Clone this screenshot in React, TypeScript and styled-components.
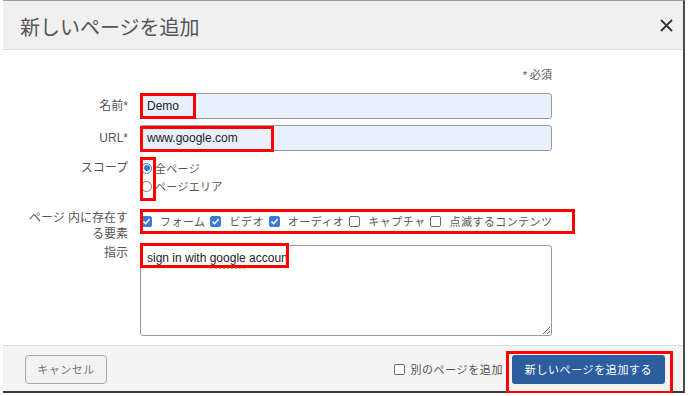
import React from "react";
import styled, { createGlobalStyle } from "styled-components";

const FONT = `"Liberation Sans", "Noto Sans CJK JP", sans-serif`;

const Global = createGlobalStyle`
  html, body { margin: 0; padding: 0; background: #fff; }
  body { font-family: ${FONT}; }
  * { box-sizing: border-box; }
`;

const Dialog = styled.div`
  position: relative;
  margin-left: 3px;
  width: 682px;
  height: 393px;
  display: flex;
  flex-direction: column;
  background: #fff;
  border-top: 1px solid #9a9a9a;
  border-right: 2px solid #4a4a4a;
  border-bottom: 2px solid #3a3a3a;
`;

const Header = styled.header`
  flex: none;
  height: 49px;
  display: flex;
  align-items: center;
  justify-content: space-between;
  padding: 0 10px 0 15px;
  background: #f0f0f0;
  border-bottom: 1px solid #dcdcdc;
`;

const Title = styled.h1`
  margin: 6px 0 0 2px;
  font-size: 20px;
  font-weight: 400;
  line-height: 26px;
  color: #555;
`;

const CloseButton = styled.button`
  width: 14px;
  height: 14px;
  padding: 0;
  border: 0;
  background: transparent;
  display: flex;
  align-items: center;
  justify-content: center;
  cursor: pointer;
`;

const Body = styled.div`
  flex: none;
  height: 295px;
  display: flex;
  flex-direction: column;
  padding: 18px 0 9px 0;
`;

const Row = styled.div<{ $mt?: number }>`
  display: grid;
  grid-template-columns: 125px 412px;
  column-gap: 12px;
  align-items: start;
  margin-top: ${(p) => p.$mt ?? 0}px;
`;

const Label = styled.label<{ $pt?: number }>`
  text-align: right;
  font-size: 12px;
  line-height: 16px;
  color: #555;
  padding-top: ${(p) => p.$pt ?? 0}px;
`;

const Note = styled.div`
  grid-column: 2;
  text-align: right;
  font-size: 11px;
  line-height: 14px;
  color: #555;
`;

const FieldBox = styled.div`
  position: relative;
`;

const TextInput = styled.input`
  display: block;
  width: 100%;
  height: 26px;
  padding: 0 6px;
  border: 1px solid #9a9a9a;
  border-radius: 3px;
  background: #e8f0fe;
  font-family: ${FONT};
  font-size: 12px;
  color: #222;
  outline: none;
`;

const TextArea = styled.textarea`
  display: block;
  width: 100%;
  height: 91px;
  padding: 5px 6px;
  border: 1px solid #9a9a9a;
  border-radius: 3px;
  background: #fff;
  font-family: ${FONT};
  font-size: 12px;
  line-height: 14px;
  color: #222;
  outline: none;
`;

const Mark = styled.span<{ $l: number; $t: number; $w: number; $h: number }>`
  position: absolute;
  left: ${(p) => p.$l}px;
  top: ${(p) => p.$t}px;
  width: ${(p) => p.$w}px;
  height: ${(p) => p.$h}px;
  border: 3px solid #f00;
  pointer-events: none;
`;

const Squiggle = styled.span`
  position: absolute;
  left: 70px;
  top: 22px;
  width: 35px;
  height: 2px;
  border-bottom: 2px dotted #f2a27a;
  pointer-events: none;
`;

const RadioGroup = styled.div`
  display: flex;
  flex-direction: column;
`;

const Option = styled.div`
  height: 18px;
  display: flex;
  align-items: center;
  gap: 3px;
  padding-left: 1px;
  font-size: 11px;
  letter-spacing: 0.3px;
  color: #555;
`;

const Radio = styled.span<{ $on?: boolean }>`
  flex: none;
  width: 11px;
  height: 11px;
  border-radius: 50%;
  border: 1px solid ${(p) => (p.$on ? "#3a7bd5" : "#767676")};
  background: #fff;
  display: flex;
  align-items: center;
  justify-content: center;
  &::after {
    content: "";
    display: ${(p) => (p.$on ? "block" : "none")};
    width: 6px;
    height: 6px;
    border-radius: 50%;
    background: #3a7bd5;
  }
`;

const CheckList = styled.div`
  position: relative;
  height: 22px;
  display: flex;
  align-items: center;
  padding-left: 1px;
`;

const CheckItem = styled.span`
  display: flex;
  align-items: center;
  gap: 8px;
  margin-right: 5px;
  font-size: 11px;
  letter-spacing: 0.45px;
  color: #555;
  white-space: nowrap;
`;

const Box = styled.span<{ $on?: boolean }>`
  flex: none;
  width: 11px;
  height: 11px;
  border-radius: 2px;
  border: 1px solid ${(p) => (p.$on ? "#3a7bd5" : "#6b6b6b")};
  background: ${(p) => (p.$on ? "#3a7bd5" : "#fff")};
  display: flex;
  align-items: center;
  justify-content: center;
`;

const Footer = styled.footer`
  flex: 1;
  display: flex;
  align-items: center;
  padding: 1px 18px 0 22px;
  background: #f4f4f4;
  border-top: 1px solid #dedede;
`;

const CancelButton = styled.button`
  width: 82px;
  height: 29px;
  border: 1px solid #a8a8a8;
  border-radius: 4px;
  background: #f2f2f2;
  font-family: ${FONT};
  font-size: 11px;
  letter-spacing: 0.5px;
  color: #777;
  cursor: pointer;
`;

const Spacer = styled.div`
  flex: 1;
`;

const FooterCheck = styled.label`
  display: flex;
  align-items: center;
  gap: 5px;
  font-size: 11px;
  letter-spacing: 0.6px;
  color: #555;
`;

const PrimaryWrap = styled.div`
  position: relative;
  margin-left: 9px;
`;

const PrimaryButton = styled.button`
  display: block;
  width: 153px;
  height: 29px;
  border: 0;
  border-radius: 3px;
  background: #2c5d9e;
  font-family: ${FONT};
  font-size: 11px;
  letter-spacing: 0.6px;
  color: #fff;
  cursor: pointer;
`;

const Tick = () => (
  <svg width="9" height="9" viewBox="0 0 9 9">
    <path d="M1.5 4.6 L3.6 6.7 L7.6 2.2" fill="none" stroke="#fff" strokeWidth="1.6" />
  </svg>
);

const Check = ({ on, children }: { on?: boolean; children: React.ReactNode }) => (
  <CheckItem>
    <Box $on={on}>{on && <Tick />}</Box>
    {children}
  </CheckItem>
);

export default function App() {
  return (
    <>
      <Global />
      <Dialog>
        <Header>
          <Title>新しいページを追加</Title>
          <CloseButton aria-label="close">
            <svg width="13" height="13" viewBox="0 0 13 13">
              <path d="M1 1 L12 12 M12 1 L1 12" stroke="#333" strokeWidth="1.8" fill="none" />
            </svg>
          </CloseButton>
        </Header>
        <Body>
          <Row>
            <Note>* 必須</Note>
          </Row>
          <Row $mt={11}>
            <Label $pt={5}>名前*</Label>
            <FieldBox>
              <TextInput defaultValue="Demo" />
              <Mark $l={0} $t={0} $w={56} $h={26} />
            </FieldBox>
          </Row>
          <Row $mt={6}>
            <Label $pt={5}>URL*</Label>
            <FieldBox>
              <TextInput defaultValue="www.google.com" />
              <Mark $l={0} $t={1} $w={134} $h={26} />
            </FieldBox>
          </Row>
          <Row $mt={8}>
            <Label $pt={1}>スコープ</Label>
            <FieldBox>
              <RadioGroup>
                <Option>
                  <Radio $on />
                  全ページ
                </Option>
                <Option>
                  <Radio />
                  ページエリア
                </Option>
              </RadioGroup>
              <Mark $l={0} $t={-2} $w={16} $h={44} />
            </FieldBox>
          </Row>
          <Row $mt={15}>
            <Label>
              ページ 内に存在す
              <br />
              る要素
            </Label>
            <CheckList>
              <Check on>フォーム</Check>
              <Check on>ビデオ</Check>
              <Check on>オーディオ</Check>
              <Check>キャプチャ</Check>
              <Check>点滅するコンテンツ</Check>
              <Mark $l={0} $t={-1} $w={435} $h={25} />
            </CheckList>
          </Row>
          <Row $mt={3}>
            <Label>指示</Label>
            <FieldBox>
              <TextArea defaultValue="sign in with google accoun" spellCheck={false} />
              <Squiggle />
              <Mark $l={0} $t={-2} $w={149} $h={25} />
            </FieldBox>
          </Row>
        </Body>
        <Footer>
          <CancelButton>キャンセル</CancelButton>
          <Spacer />
          <FooterCheck>
            <Box />
            別のページを追加
          </FooterCheck>
          <PrimaryWrap>
            <PrimaryButton>新しいページを追加する</PrimaryButton>
            <Mark $l={-6} $t={-4} $w={167} $h={43} />
          </PrimaryWrap>
        </Footer>
      </Dialog>
    </>
  );
}
